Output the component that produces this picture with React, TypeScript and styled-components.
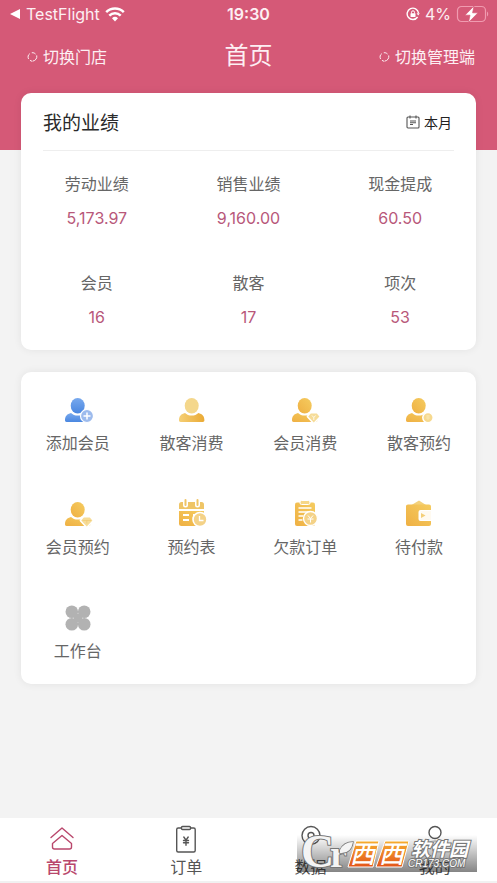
import React from "react";
import styled, { createGlobalStyle } from "styled-components";

const GlobalStyle = createGlobalStyle`
  *, *::before, *::after { box-sizing: border-box; }
  body {
    margin: 0;
    background: #f3f3f3;
    font-family: Inter, "Noto Sans CJK SC", sans-serif;
    color: #666;
  }
  button { font: inherit; color: inherit; background: none; border: 0; padding: 0; cursor: pointer; }
  h1, h2, dl, dt, dd, p { margin: 0; font-weight: 400; }
`;

const Page = styled.div`
  position: relative;
  min-height: 100vh;
  display: flex;
  flex-direction: column;
`;

const Header = styled.header`
  background: #d55977;
  color: #fdeff3;
  padding-bottom: 64px;
`;

const StatusBar = styled.div`
  display: grid;
  grid-template-columns: 1fr auto 1fr;
  align-items: center;
  height: 28px;
  padding: 0 8px;
  font-size: 16px;
`;

const StatusGroup = styled.div<{ $end?: boolean }>`
  display: flex;
  align-items: center;
  gap: 5px;
  justify-content: ${(p) => (p.$end ? "flex-end" : "flex-start")};
`;

const Clock = styled.span`
  font-weight: 600;
`;

const NavBar = styled.nav`
  display: grid;
  grid-template-columns: 1fr auto 1fr;
  align-items: center;
  height: 56px;
  margin-bottom: 2px;
  padding: 0 22px;
`;

const PageTitle = styled.h1`
  font-size: 24px;
  line-height: 32px;
`;

const SwitchButton = styled.button<{ $end?: boolean }>`
  display: flex;
  align-items: center;
  gap: 4px;
  padding-left: 4px;
  font-size: 16px;
  justify-self: ${(p) => (p.$end ? "end" : "start")};
`;

const Main = styled.main`
  flex: 1;
  display: flex;
  flex-direction: column;
  gap: 22px;
  margin-top: -57px;
  padding: 0 21px 24px 21px;
`;

const Card = styled.section`
  background: #fff;
  border-radius: 10px;
  box-shadow: 0 0 8px rgba(0, 0, 0, 0.07);
`;

const CardHeader = styled.div`
  display: flex;
  align-items: center;
  justify-content: space-between;
  height: 58px;
  margin: 0 22px;
  border-bottom: 1px solid #eee;
`;

const CardTitle = styled.h2`
  font-size: 19px;
  color: #2b2b2b;
`;

const PeriodButton = styled.button`
  display: flex;
  align-items: center;
  gap: 4px;
  padding-right: 2px;
  font-size: 14px;
  color: #222;
`;

const Stats = styled.dl`
  display: grid;
  grid-template-columns: repeat(3, 1fr);
  row-gap: 31px;
  padding: 16px 0;
  text-align: center;
  font-size: 16px;
  line-height: 34px;
`;

const StatValue = styled.dd`
  color: #b8587a;
`;

const Actions = styled.div`
  display: grid;
  grid-template-columns: repeat(4, 1fr);
`;

const ActionButton = styled.button`
  display: flex;
  flex-direction: column;
  align-items: center;
  padding: 22px 0 16px;
  font-size: 16px;
  line-height: 34px;
`;

const TabBar = styled.nav`
  display: grid;
  grid-template-columns: repeat(4, 1fr);
  background: #fff;
  border-bottom: 2px solid #f1f1f1;
`;

const Tab = styled.button<{ $active?: boolean }>`
  display: flex;
  flex-direction: column;
  align-items: center;
  padding: 7px 0 2px;
  font-size: 16px;
  font-weight: ${(p) => (p.$active ? 500 : 400)};
  line-height: 24px;
  color: ${(p) => (p.$active ? "#b9476c" : "#555")};
`;

const Watermark = styled.svg`
  position: absolute;
  right: 20px;
  bottom: 11px;
  width: 180px;
  height: 46px;
  overflow: visible;
  pointer-events: none;
`;

const Definitions = styled.svg`
  position: absolute;
  width: 0;
  height: 0;
`;

const RefreshIcon = () => (
  <svg width="13" height="13" viewBox="0 0 13 13" fill="none" stroke="currentColor" strokeWidth="1" strokeLinecap="round">
    <path d="M2.4 8.6C1.6 6.8 2 4.900 3.500 3.900M6.200 2.700c1.300-.1 2.300.3 3.100 1.100M10.800 5.800c.5 2.400-1.100 4.900-3.800 5.300M5.800 11.200l-1.500-.7" />
  </svg>
);

const WifiIcon = () => (
  <svg width="20" height="15" viewBox="0 0 20 15" fill="none" stroke="#fff" strokeWidth="2.5">
    <path d="M1.2 5.2a12.6 12.6 0 0 1 17.6 0M4.3 8.6a8.1 8.1 0 0 1 11.4 0" />
    <path d="m10 14.4-3-3.2a4.3 4.3 0 0 1 6 0z" fill="#fff" stroke="none" />
  </svg>
);

const BackIcon = () => (
  <svg width="13" height="12" viewBox="0 0 13 12" fill="#fff">
    <path d="M2 6 12 1v10z" />
  </svg>
);

const LockIcon = () => (
  <svg width="14" height="14" viewBox="0 0 14 14" fill="none" stroke="#fff" strokeWidth="1.4">
    <path d="M11.6 10A5.7 5.7 0 1 1 12.5 6" />
    <path d="m10.6 6.3 3.2 0-1.6 2.2z" fill="#fff" stroke="none" />
    <rect x="4.5" y="6.2" width="5" height="3.8" rx=".5" fill="#fff" stroke="none" />
    <path d="M5.5 6.5V5.3a1.5 1.5 0 0 1 3 0v1.2" strokeWidth="1" />
  </svg>
);

const BatteryIcon = () => (
  <svg width="33" height="18" viewBox="0 0 33 18" fill="none">
    <rect x="1.5" y="1.5" width="28" height="15" rx="4" stroke="#f09bb0" strokeWidth="1.2" />
    <path d="M31 6.5c1.6.7 1.6 4.300 0 5z" fill="#f09bb0" />
    <path d="M18 1 9 10.200h5L12.500 17.500 22 7.800h-5.400z" fill="#fff" stroke="#d55977" strokeWidth=".7" />
  </svg>
);

const CalendarIcon = () => (
  <svg width="14" height="14" viewBox="0 0 14 14" fill="none" stroke="#555" strokeWidth="1.1">
    <rect x="1" y="2" width="12" height="11" rx="1" />
    <path d="M4 .5v3M10 .5v3M4 6h6M4 7.7h6M4 9.5h3" />
  </svg>
);

type IconKind =
  | "add" | "guest" | "memberPay" | "guestBook" | "memberBook"
  | "schedule" | "debt" | "wallet" | "workbench";

const Gradients = () => (
  <Definitions aria-hidden="true">
    <defs>
      <linearGradient id="blue" x1="0" y1="0" x2="0" y2="1">
        <stop offset="0" stopColor="#78a9ee" />
        <stop offset="1" stopColor="#4a87e0" />
      </linearGradient>
      <linearGradient id="gold" x1="1" y1="0" x2="0" y2="1">
        <stop offset="0" stopColor="#f5cc60" />
        <stop offset="1" stopColor="#efb043" />
      </linearGradient>
      <linearGradient id="body" x1="0" y1="0" x2="1" y2="0">
        <stop offset="0" stopColor="#f5cf75" />
        <stop offset="1" stopColor="#eaaa35" />
      </linearGradient>
    </defs>
  </Definitions>
);

const Person = ({ head, body }: { head: string; body: string }) => (
  <>
    <path d="M3 26.300c0-4.300 2.200-6.300 6-7.300 1.700 1.700 4 2.600 6.700 2.600s5-.9 6.700-2.600c3.800 1 6 3 6 7.300 0 1.200-.5 1.700-1.600 1.700H4.600C3.500 28 3 27.500 3 26.300Z" fill={body} />
    <ellipse cx="15.700" cy="11.700" rx="7" ry="7.700" fill={head} />
  </>
);

const Diamond = () => (
  <>
    <path d="m21.800 19.500-2.600 3 5.600 6 5.600-6-2.600-3z" fill="#fff" stroke="#fff" strokeWidth="3" strokeLinejoin="round" />
    <path d="m21.800 19.500-2.600 3 5.600 6 5.600-6-2.600-3z" fill="#f6dc98" />
  </>
);

const ActionIcon = ({ kind }: { kind: IconKind }) => (
  <svg width="32" height="32" viewBox="0 0 32 32" fill="none">
    {kind === "add" && (
      <>
        <Person head="url(#blue)" body="url(#blue)" />
        <circle cx="25" cy="22" r="6.500" fill="#9dbbed" stroke="#fff" strokeWidth="1.200" />
        <path d="M25 18.500v7M21.500 22h7" stroke="#fff" strokeWidth="1.500" />
      </>
    )}
    {kind === "guest" && <Person head="#f4d78c" body="url(#body)" />}
    {kind === "memberPay" && (
      <>
        <Person head="url(#gold)" body="url(#gold)" />
        <Diamond />
        <path d="m23 21.500 1.800 2 1.800-2M24.800 23.500V26" stroke="#fff" strokeWidth=".8" />
      </>
    )}
    {kind === "guestBook" && (
      <>
        <Person head="url(#gold)" body="url(#gold)" />
        <circle cx="25" cy="23.600" r="5.200" fill="#f6d98f" stroke="#fff" strokeWidth="1.500" />
        <path d="M23 22h4M23 24h4M25 21v5" stroke="#fbe8b5" strokeWidth=".8" />
      </>
    )}
    {kind === "memberBook" && (
      <>
        <Person head="url(#gold)" body="url(#gold)" />
        <Diamond />
        <path d="M20.500 22.500h8.600M24.800 22.500v3" stroke="#f0c66c" strokeWidth=".6" />
      </>
    )}
    {kind === "schedule" && (
      <>
        <path d="M3 11V6.500Q3 4 5.500 4h20Q28 4 28 6.500V11z" fill="#efc566" />
        <path d="M9.500 1v6M21.500 1v6" stroke="#fff" strokeWidth="5" strokeLinecap="round" />
        <path d="M9.500 2v5M21.500 2v5" stroke="#efc566" strokeWidth="2" strokeLinecap="round" />
        <path d="M3 13h25v12.500q0 2.500-2.500 2.500h-20Q3 28 3 25.500z" fill="url(#gold)" />
        <path d="M7 17h6M17 17h6M7 22h6" stroke="#fff" strokeWidth="1.800" />
        <circle cx="24" cy="21.500" r="7" fill="#f4d287" stroke="#fff" strokeWidth="1.600" />
        <path d="M23.500 18v4.500h4" stroke="#fff" strokeWidth="1.300" />
      </>
    )}
    {kind === "debt" && (
      <>
        <rect x="6" y="4.500" width="20" height="23.500" rx="2" fill="url(#gold)" />
        <rect x="11" y="2.500" width="10" height="4" rx="1.500" fill="#f6d787" stroke="#fff" />
        <path d="M9.500 10h13M9.500 14h11M9.500 18h5M9.500 22h4" stroke="#fff" strokeWidth="1.500" />
        <circle cx="21.500" cy="20.500" r="7" fill="#f4d287" stroke="#fff" strokeWidth="1.400" />
        <path d="m19 17.500 2.500 3 2.500-3M18.500 21h6M21.500 20.500v4" stroke="#fff" />
      </>
    )}
    {kind === "wallet" && (
      <>
        <path d="m8.500 7 7.500-4.500L23 7z" fill="#f4d17b" />
        <path d="M3 8q0-1.500 2-1.500h21q2 0 2 2V12H17.500q-2 0-2 2v7q0 2 2 2H28v3q0 2-2 2H5q-2 0-2-2z" fill="url(#gold)" />
        <path d="M17.500 13H28v9H17.500z" fill="#fffaf0" />
        <path d="m18 15 4.500 2.500L18 20z" fill="#f4cf79" />
      </>
    )}
    {kind === "workbench" && (
      <g fill="#b2b2b2">
        <circle cx="9.800" cy="9.800" r="6.300" />
        <circle cx="22.200" cy="9.800" r="6.300" />
        <circle cx="9.800" cy="22.200" r="6.300" />
        <circle cx="22.200" cy="22.200" r="6.300" />
        <path d="M12 12h8v8h-8z" />
      </g>
    )}
  </svg>
);

const TabIcon = ({ kind }: { kind: string }) => (
  <svg width="30" height="30" viewBox="0 0 30 30" fill="none" stroke="currentColor" strokeWidth="1.400" strokeLinecap="round" strokeLinejoin="round">
    {kind === "home" && (
      <path d="M4 12.500 15 3l11 9.500M5.500 18.500 15 10.500l9.500 8V22q0 2-2 2h-15q-2 0-2-2z" />
    )}
    {kind === "orders" && (
      <>
        <rect x="5.700" y="3" width="18.500" height="24" rx="1.500" />
        <rect x="10.500" y="1.500" width="9" height="3" rx="1" fill="#fff" />
        <path d="m12.800 12 2.200 3.200 2.200-3.200M12.500 15.500h5M12.500 17.800h5M15 15.200v5" />
      </>
    )}
    {kind === "data" && (
      <>
        <circle cx="15" cy="10.500" r="9" />
        <circle cx="15" cy="10.500" r="3" />
      </>
    )}
    {kind === "mine" && (
      <>
        <circle cx="15" cy="7.500" r="6" />
        <path d="M4.500 25c0-5.500 4.500-9 10.500-9s10.500 3.500 10.500 9" strokeOpacity=".4" />
      </>
    )}
  </svg>
);

const stats = [
  ["劳动业绩", "5,173.97"],
  ["销售业绩", "9,160.00"],
  ["现金提成", "60.50"],
  ["会员", "16"],
  ["散客", "17"],
  ["项次", "53"],
];

const actions: { kind: IconKind; label: string }[] = [
  { kind: "add", label: "添加会员" },
  { kind: "guest", label: "散客消费" },
  { kind: "memberPay", label: "会员消费" },
  { kind: "guestBook", label: "散客预约" },
  { kind: "memberBook", label: "会员预约" },
  { kind: "schedule", label: "预约表" },
  { kind: "debt", label: "欠款订单" },
  { kind: "wallet", label: "待付款" },
  { kind: "workbench", label: "工作台" },
];

const tabs = [
  { kind: "home", label: "首页" },
  { kind: "orders", label: "订单" },
  { kind: "data", label: "数据" },
  { kind: "mine", label: "我的" },
];

const SiteMark = () => (
  <Watermark viewBox="0 0 180 46">
    <defs>
      <linearGradient id="shade" x1="0" y1="0" x2="0" y2="1">
        <stop offset="0" stopColor="#000" stopOpacity="0" />
        <stop offset="1" stopColor="#000" stopOpacity=".48" />
      </linearGradient>
      <linearGradient id="orange" x1="0" y1="0" x2="0" y2="1">
        <stop offset="0" stopColor="#f6ae2e" />
        <stop offset="1" stopColor="#e3541b" />
      </linearGradient>
    </defs>
    <rect y="9" width="180" height="37" fill="url(#shade)" />
    <g fill="#f4f4f4" stroke="#777" strokeWidth="2" paintOrder="stroke" fontFamily="Liberation Serif, serif" fontWeight="700">
      <text x="4" y="41" fontSize="46">C</text>
      <text x="33" y="41" fontSize="38">r</text>
      <path d="M43 24q4-8 13-8-2 12-13 11z" strokeWidth="1.500" />
    </g>
    <path d="M59 15h23l-6 26H51zM88 15h24l-7 26H79z" fill="url(#orange)" stroke="#fff" strokeWidth="1" />
    <g fontFamily="Noto Sans CJK SC, sans-serif" fontStyle="italic" fontWeight="700">
      <g fontSize="25" fontWeight="500" fill="#fff">
        <text x="53" y="37">西</text>
        <text x="82" y="37">西</text>
      </g>
      <g fill="#fff" stroke="#777" strokeWidth="2" paintOrder="stroke">
        <text x="114" y="30" fontSize="19">软件园</text>
        <text x="111" y="41" fontSize="10" fontFamily="Liberation Sans, sans-serif" fontWeight="400">CR173.COM</text>
      </g>
    </g>
  </Watermark>
);

export default function App() {
  return (
    <Page>
      <GlobalStyle />
      <Gradients />
      <Header>
        <StatusBar>
          <StatusGroup>
            <BackIcon />
            <span>TestFlight</span>
            <WifiIcon />
          </StatusGroup>
          <Clock>19:30</Clock>
          <StatusGroup $end>
            <LockIcon />
            <span>4%</span>
            <BatteryIcon />
          </StatusGroup>
        </StatusBar>
        <NavBar>
          <SwitchButton><RefreshIcon />切换门店</SwitchButton>
          <PageTitle>首页</PageTitle>
          <SwitchButton $end><RefreshIcon />切换管理端</SwitchButton>
        </NavBar>
      </Header>
      <Main>
        <Card>
          <CardHeader>
            <CardTitle>我的业绩</CardTitle>
            <PeriodButton><CalendarIcon />本月</PeriodButton>
          </CardHeader>
          <Stats>
            {stats.map(([label, value]) => (
              <div key={label}>
                <dt>{label}</dt>
                <StatValue>{value}</StatValue>
              </div>
            ))}
          </Stats>
        </Card>
        <Card>
          <Actions>
            {actions.map(({ kind, label }) => (
              <ActionButton key={kind}>
                <ActionIcon kind={kind} />
                {label}
              </ActionButton>
            ))}
          </Actions>
        </Card>
      </Main>
      <TabBar>
        {tabs.map(({ kind, label }) => (
          <Tab key={kind} $active={kind === "home"}>
            <TabIcon kind={kind} />
            {label}
          </Tab>
        ))}
      </TabBar>
      <SiteMark />
    </Page>
  );
}
